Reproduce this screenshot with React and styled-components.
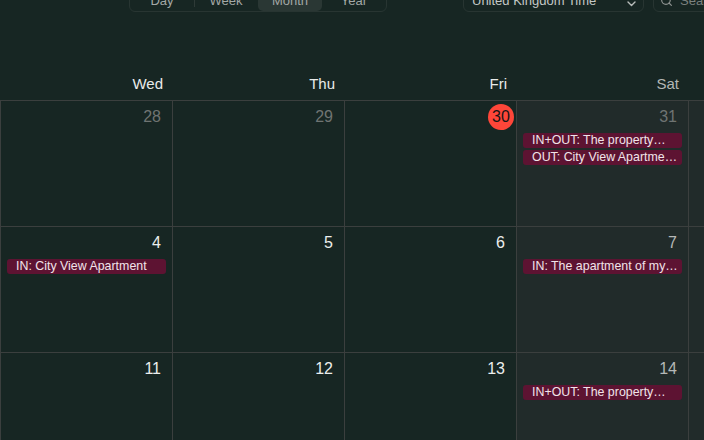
import React from "react";
import styled, { createGlobalStyle } from "styled-components";
import { Search } from "lucide-react";

const GlobalStyle = createGlobalStyle`
  html, body {
    margin: 0;
    padding: 0;
    background: #172623;
  }
  body {
    font-family: "Liberation Sans", Arial, sans-serif;
    -webkit-font-smoothing: antialiased;
  }
`;

const days = [
  { name: "Wed" },
  { name: "Thu" },
  { name: "Fri" },
  { name: "Sat", weekend: true },
  { name: "Sun", weekend: true },
];

const weeks = [
  [
    { d: 28, muted: true },
    { d: 29, muted: true },
    { d: 30, today: true },
    {
      d: 31,
      muted: true,
      events: ["IN+OUT: The property…", "OUT: City View Apartme…"],
    },
    { d: 1 },
  ],
  [
    { d: 4, events: ["IN: City View Apartment"] },
    { d: 5 },
    { d: 6 },
    { d: 7, events: ["IN: The apartment of my…"] },
    { d: 8 },
  ],
  [
    { d: 11 },
    { d: 12 },
    { d: 13 },
    { d: 14, events: ["IN+OUT: The property…"] },
    { d: 15 },
  ],
];

const App = () => {
  return (
    <Page>
      <GlobalStyle />
      <Toolbar>
        <Segmented>
          <Segment>Day</Segment>
          <Segment $divider>Week</Segment>
          <Segment $active>Month</Segment>
          <Segment>Year</Segment>
        </Segmented>
        <ZoneSelect>
          <span>United Kingdom Time</span>
          <svg width="9" height="6" viewBox="0 0 9 6">
            <path
              d="M1 1l3.5 3.5L8 1"
              fill="none"
              stroke="#b9bdbb"
              strokeWidth="1.4"
              strokeLinecap="round"
              strokeLinejoin="round"
            />
          </svg>
        </ZoneSelect>
        <SearchBox>
          <Search size={13} strokeWidth={2.2} />
          <span>Search</span>
        </SearchBox>
      </Toolbar>

      <HeaderRow>
        {days.map((day) => (
          <DayName key={day.name} $weekend={day.weekend}>
            {day.name}
          </DayName>
        ))}
      </HeaderRow>

      <MonthGrid>
        {weeks.map((week, wi) =>
          week.map((cell, ci) => {
            const weekend = days[ci].weekend;
            return (
              <Cell key={`${wi}-${ci}`} $weekend={weekend}>
                <CellHead>
                  <DateNum
                    $today={cell.today}
                    $muted={cell.muted}
                    $weekend={weekend}
                  >
                    {cell.d}
                  </DateNum>
                </CellHead>
                {cell.events && (
                  <EventList>
                    {cell.events.map((ev) => (
                      <EventBar key={ev}>{ev}</EventBar>
                    ))}
                  </EventList>
                )}
              </Cell>
            );
          })
        )}
      </MonthGrid>
    </Page>
  );
};

const Page = styled.div`
  width: 704px;
  height: 440px;
  overflow: hidden;
  background: #172623;
  display: flex;
  flex-direction: column;
`;

const Toolbar = styled.div`
  display: flex;
  align-items: center;
  height: 24px;
  margin-top: -12px;
  padding-left: 129px;
  flex-shrink: 0;
`;

const Segmented = styled.div`
  display: flex;
  width: 258px;
  height: 24px;
  box-sizing: border-box;
  border: 1px solid #283532;
  border-radius: 6px;
  flex-shrink: 0;
`;

const Segment = styled.div`
  flex: 1;
  position: relative;
  display: flex;
  align-items: center;
  justify-content: center;
  padding-top: 1px;
  font-size: 13px;
  color: #a3a8a6;
  border-radius: 5px;
  background: ${(p) => (p.$active ? "#2a3734" : "transparent")};

  &::before {
    content: "";
    display: ${(p) => (p.$divider ? "block" : "none")};
    position: absolute;
    left: 0;
    top: 5px;
    bottom: 4px;
    width: 1px;
    background: #2e3a37;
  }
`;

const ZoneSelect = styled.div`
  margin-left: 76px;
  width: 181px;
  height: 24px;
  box-sizing: border-box;
  border: 1px solid #283532;
  border-radius: 6px;
  display: flex;
  align-items: center;
  justify-content: space-between;
  padding: 1px 7px 0 8px;
  font-size: 13px;
  color: #c4c8c6;
  flex-shrink: 0;

  svg {
    margin-top: 6px;
  }
`;

const SearchBox = styled.div`
  margin-left: 9px;
  width: 150px;
  height: 24px;
  box-sizing: border-box;
  border: 1px solid #283532;
  border-radius: 6px;
  display: flex;
  align-items: center;
  gap: 7px;
  padding: 1px 0 0 6px;
  font-size: 13px;
  color: #7b817f;
  flex-shrink: 0;

  svg {
    color: #8d9290;
  }
`;

const HeaderRow = styled.div`
  display: grid;
  grid-template-columns: repeat(5, 172px);
  height: 88px;
  flex-shrink: 0;
`;

const DayName = styled.div`
  display: flex;
  justify-content: flex-end;
  align-items: flex-end;
  padding: 0 9px 7px 0;
  font-size: 15px;
  line-height: 18px;
  color: ${(p) => (p.$weekend ? "#b3b7b5" : "#e9ebea")};
`;

const MonthGrid = styled.div`
  display: grid;
  grid-template-columns: repeat(5, 172px);
  grid-auto-rows: 126px;
`;

const Cell = styled.div`
  box-sizing: border-box;
  border-left: 1px solid #3b3f3e;
  border-top: 1px solid #3b3f3e;
  background: ${(p) => (p.$weekend ? "#212b2a" : "#172623")};
  display: flex;
  flex-direction: column;
  min-width: 0;
`;

const CellHead = styled.div`
  display: flex;
  justify-content: flex-end;
  padding: 3px 2px 0 0;
`;

const dateColor = (p) => {
  if (p.$today) return "#161616";
  if (p.$muted) return "#6f7472";
  if (p.$weekend) return "#b5b8b7";
  return "#eceeed";
};

const DateNum = styled.div`
  height: 26px;
  line-height: 26px;
  font-size: 16px;
  color: ${dateColor};
  ${(p) =>
    p.$today
      ? `
    width: 26px;
    border-radius: 50%;
    background: #fe4639;
    text-align: center;
  `
      : `
    padding-right: 9px;
  `}
`;

const EventList = styled.div`
  display: flex;
  flex-direction: column;
  gap: 2px;
  padding: 3px 6px 0 6px;
`;

const EventBar = styled.div`
  height: 15px;
  line-height: 15px;
  background: #5d1332;
  border-radius: 3px;
  padding: 0 0 0 9px;
  font-size: 12.4px;
  color: #f1e3e9;
  white-space: nowrap;
  overflow: hidden;
  text-overflow: clip;
`;

export default App;
